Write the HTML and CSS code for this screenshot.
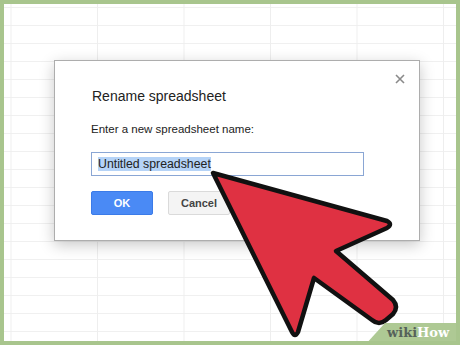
FILE: index.html
```html
<!DOCTYPE html>
<html lang="en">
<head>
  <meta charset="UTF-8" />
  <meta name="viewport" content="width=device-width, initial-scale=1.0"/>
  <title>Rename spreadsheet</title>
  <link rel="stylesheet" href="styles.css">
</head>
<body>
  <div class="sheet">
    <div class="dialog">
      <svg class="close" width="10" height="10" viewBox="0 0 10 10">
        <path d="M1 1 L9 9 M9 1 L1 9" stroke="#8a8a8a" stroke-width="1.6" fill="none"/>
      </svg>
      <h2>Rename spreadsheet</h2>

      <label for="name">Enter a new spreadsheet name:</label>
      <div class="field" id="name"><span class="selected">Untitled spreadsheet</span></div>

      <div class="buttons">
        <button class="ok">OK</button>
        <button class="cancel">Cancel</button>
      </div>
    </div>

    <!-- big pointer arrow drawn over the dialog -->
    <svg class="arrow" width="460" height="345" viewBox="0 0 460 345">
      <path d="M213,173 L387,221 Q393,224 387,228 L336,251 L393,300 Q399,307 393,314 L386,320 Q379,326 372,320 L314,278 L298,332 Q295,338 292,332 Z"
            fill="#df3142" stroke="#111" stroke-width="4.5" stroke-linejoin="round"/>
    </svg>

    <div class="badge"><span class="wiki">wiki</span><span class="how">How</span></div>
  </div>
</body>
</html>
```

FILE: styles.css
```css
* {
  box-sizing: border-box;
}

body {
  margin: 0;
  font-family: 'Liberation Sans', Arial, sans-serif;
}

.sheet {
  position: relative;
  width: 460px;
  height: 345px;
  border: 4px solid #a8c58d;
  padding: 56px 0 0 50px;
  background-color: #fff;
  background-image:
    linear-gradient(to right, #eeeeee 1px, transparent 1px),
    linear-gradient(to bottom, #f0f0f0 1px, transparent 1px);
  background-size: 86.5px 100%, 100% 18px;
  background-position: 6.5px 0, 0 3px;
  overflow: hidden;
}

.dialog {
  position: relative;
  width: 366px;
  height: 181px;
  background: #fff;
  border: 1px solid #adadad;
  box-shadow: 0 4px 14px rgba(0,0,0,0.22);
  padding: 26px 0 0 36px;
}

.close {
  position: absolute;
  top: 13px;
  right: 14px;
}

h2 {
  margin: 0 0 0 1px;
  font-size: 14px;
  line-height: 18px;
  font-weight: normal;
  color: #222;
}

label {
  display: block;
  margin-top: 17px;
  font-size: 11.5px;
  line-height: 15px;
  color: #222;
}

.field {
  width: 273px;
  height: 24px;
  margin-top: 15px;
  border: 1px solid #8aa6d4;
  padding: 4px 0 0 6px;
  font-size: 12.3px;
  line-height: 14px;
  color: #222;
}

.selected {
  background: #b5d3f7;
}

.buttons {
  display: flex;
  gap: 15px;
  margin-top: 15px;
}

button {
  height: 24px;
  width: 62px;
  border-radius: 2px;
  font-family: 'Liberation Sans', Arial, sans-serif;
  font-size: 11px;
  font-weight: bold;
  padding: 0;
}

.ok {
  background: #4a8af5;
  border: 1px solid #3b7be8;
  color: #fff;
}

.cancel {
  background: #f4f4f4;
  border: 1px solid #dadada;
  color: #444;
}

.arrow {
  position: absolute;
  left: -4px;
  top: -4px;
}

.badge {
  position: absolute;
  right: -4px;
  bottom: -4px;
  width: 95px;
  height: 22px;
  padding: 2px 0 0 22px;
  background: #aec994;
  clip-path: polygon(20px 0, 100% 0, 100% 100%, 0 100%);
  font-family: 'DejaVu Serif', serif;
  font-weight: bold;
  font-size: 13px;
  line-height: 16px;
}

.wiki {
  color: #56625a;
}

.how {
  color: #fff;
}
```
